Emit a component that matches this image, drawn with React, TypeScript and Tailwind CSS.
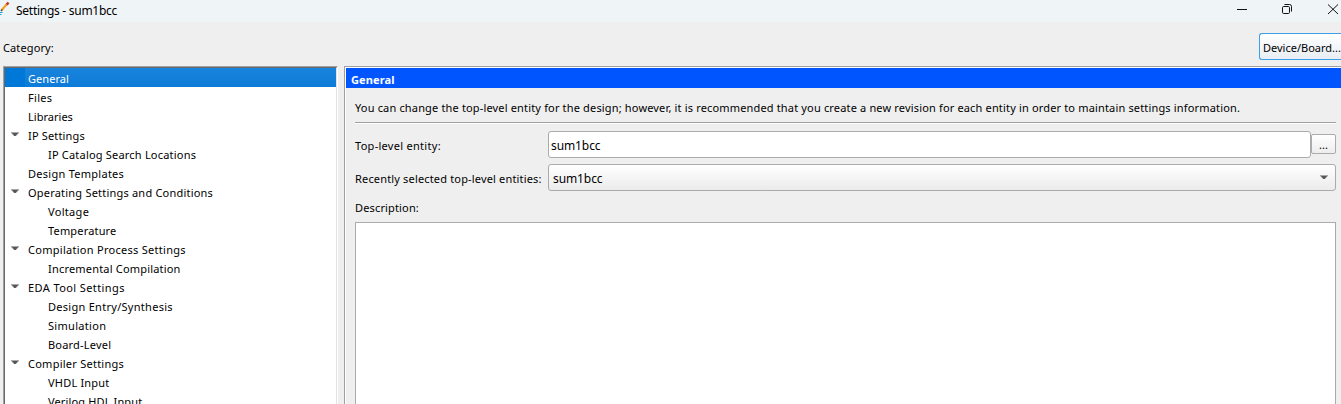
type Node = { label: string; child?: boolean; open?: boolean; selected?: boolean; tracking: string };

const nodes: Node[] = [
  { label: "General", selected: true, tracking: "tracking-[0.05px]" },
  { label: "Files", tracking: "tracking-[0.3px]" },
  { label: "Libraries", tracking: "tracking-[0.02px]" },
  { label: "IP Settings", open: true, tracking: "tracking-[0.16px]" },
  { label: "IP Catalog Search Locations", child: true, tracking: "tracking-[0.2px]" },
  { label: "Design Templates", tracking: "tracking-[0.27px]" },
  { label: "Operating Settings and Conditions", open: true, tracking: "tracking-[0.21px]" },
  { label: "Voltage", child: true, tracking: "tracking-[0.32px]" },
  { label: "Temperature", child: true, tracking: "tracking-[0.17px]" },
  { label: "Compilation Process Settings", open: true, tracking: "tracking-[0.28px]" },
  { label: "Incremental Compilation", child: true, tracking: "tracking-[0.19px]" },
  { label: "EDA Tool Settings", open: true, tracking: "tracking-[0.4px]" },
  { label: "Design Entry/Synthesis", child: true, tracking: "tracking-[0.28px]" },
  { label: "Simulation", child: true, tracking: "tracking-[0.3px]" },
  { label: "Board-Level", child: true, tracking: "tracking-[0.2px]" },
  { label: "Compiler Settings", open: true, tracking: "tracking-[0.25px]" },
  { label: "VHDL Input", child: true, tracking: "tracking-[0.2px]" },
  { label: "Verilog HDL Input", child: true, tracking: "tracking-[0.14px]" },
];

function Arrow() {
  return (
    <svg width="8" height="5" viewBox="0 0 8 5" className="shrink-0">
      <path d="M0 0H8V1L5 4H3L0 1Z" fill="#a8a8a8" />
      <path d="M1 1H7L4.5 4H3.5Z" fill="#555" />
    </svg>
  );
}

function TitleBar() {
  return (
    <header className="flex h-[22px] shrink-0 items-start bg-[#eff4f7]">
      <svg width="10" height="16" viewBox="0 0 10 16" className="mt-px shrink-0">
        <path d="M1.6 9.2 6.6 3.4" stroke="#f5a11c" strokeWidth="2.2" />
        <path d="M6.5 3.7 8.6 1.6" stroke="#c9352b" strokeWidth="2.4" />
        <path d="M1 10 2.2 8.6" stroke="#5a4a42" strokeWidth="1.6" />
        <path d="M0 11.5H2.5M0 13.5H1.5" stroke="#16a3e0" />
      </svg>
      <h1 className="ml-[6px] text-[12px] leading-[22px] tracking-[-0.27px] whitespace-nowrap">Settings - sum1bcc</h1>
      <svg width="110" height="22" viewBox="0 0 110 22" className="ml-auto shrink-0" fill="none" stroke="#111">
        <path d="M6 9.5H16" />
        <rect x="51.5" y="6.5" width="7" height="7" rx="1.2" />
        <path d="M53.5 4.5H58.5Q60.5 4.5 60.5 6.5V11.5" />
        <path d="M97 4.5 107 14M107 4.5 97 14" />
      </svg>
    </header>
  );
}

function Tree() {
  return (
    <nav className="ml-[3px] h-[338px] w-[335px] shrink-0 overflow-hidden border-t border-r border-l border-t-[#a0a0a0] border-r-white border-l-[#a0a0a0]">
      <div className="h-full border-t border-r border-l border-t-[#696969] border-r-[#e3e3e3] border-l-[#696969] bg-white">
        {nodes.map((n) => (
          <div
            key={n.label}
            className={
              "flex h-[19px] items-center " +
              (n.selected ? "bg-linear-to-b from-[#1984dc] to-[#0c7bd8] text-white" : "")
            }
          >
            <span className={"flex h-full shrink-0 pl-[6px] pt-[7px] " + (n.child ? "w-[43px]" : n.selected ? "mr-[3px] w-5 bg-[#0078d7]" : "w-[23px]")}>
              {n.open && <Arrow />}
            </span>
            <span className={"pt-[2px] leading-[17px] whitespace-nowrap " + n.tracking}>{n.label}</span>
          </div>
        ))}
      </div>
    </nav>
  );
}

function Settings() {
  return (
    <main className="ml-[6px] flex h-[338px] min-w-0 grow flex-col overflow-hidden border-t border-l border-[#a0a0a0]">
      <div className="flex h-full flex-col border-t border-l border-white">
        <h2 className="h-5 shrink-0 bg-[#0055ff] pl-[5px] text-[11px] leading-[24px] font-bold tracking-[0.1px] text-white">General</h2>
        <div className="flex grow flex-col pr-[5px] pl-[9px]">
          <p className="h-[34px] shrink-0 pt-[11px] leading-[17px] tracking-[0.162px] whitespace-nowrap">
            You can change the top-level entity for the design; however, it is recommended that you create a new revision for each entity in order to maintain settings information.
          </p>
          <hr className="h-[2px] shrink-0 border-t border-b border-t-[#a0a0a0] border-b-white" />
          <div className="mt-[7px] flex h-[27px] shrink-0 items-center">
            <label className="w-[193px] pt-[4px] tracking-[0.29px] whitespace-nowrap">Top-level entity:</label>
            <div className="flex h-[27px] grow items-center rounded-[3px] border border-[#ababab] bg-white pt-[3px] pl-[2px] text-[12px] tracking-[-0.1px]">sum1bcc</div>
            <button className="mb-px flex h-5 w-[25px] items-end justify-center rounded-[2px] border border-[#ababab] bg-linear-to-b from-white to-[#ededed] pb-px leading-[14px]">...</button>
          </div>
          <div className="mt-[6px] flex h-[27px] shrink-0 items-center">
            <label className="w-[193px] pt-[4px] tracking-[0.165px] whitespace-nowrap">Recently selected top-level entities:</label>
            <div className="flex h-[27px] grow items-center justify-between rounded-[3px] border border-[#ababab] bg-linear-to-b from-white to-[#ebebeb] pr-[7px] pl-1 text-[12px] tracking-[-0.1px]">
              <span className="pt-[3px]">sum1bcc</span>
              <Arrow />
            </div>
          </div>
          <label className="h-[31px] shrink-0 pt-[8px] leading-[17px] tracking-[0.15px]">Description:</label>
          <div className="grow border-x border-t border-[#ababab] bg-white" />
        </div>
      </div>
    </main>
  );
}

export default function App() {
  return (
    <div className="flex h-[404px] w-[1341px] flex-col overflow-hidden bg-[#efefef] font-['Noto_Sans',sans-serif] text-[11px] text-black">
      <TitleBar />
      <div className="flex h-11 shrink-0 items-start justify-between overflow-hidden pl-[3px]">
        <span className="pt-[17px] leading-[17px] tracking-[0.12px]">Category:</span>
        <button className="mt-[11px] h-[27px] w-[82px] shrink-0 rounded-l-[3px] border border-r-0 border-[#3c9fe8] bg-linear-to-b from-white to-[#e8eef4] pt-[3px] pl-[3px] text-left whitespace-nowrap">Device/Board...</button>
      </div>
      <div className="flex">
        <Tree />
        <Settings />
      </div>
    </div>
  );
}
